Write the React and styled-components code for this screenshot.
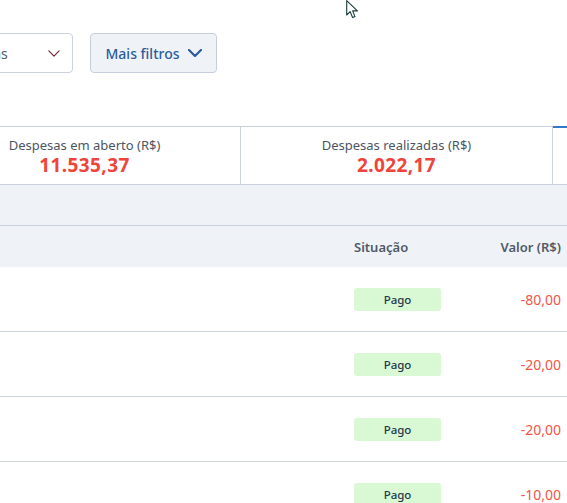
import React from "react";
import styled, { createGlobalStyle } from "styled-components";

const Global = createGlobalStyle`
  html, body { margin: 0; padding: 0; background: #fff; overflow: hidden; }
  body { font-family: "Noto Sans", "Open Sans", sans-serif; width: 567px; height: 503px; position: relative; }
`;

const Page = styled.div`
  margin-left: -71px;
  width: 638px;
`;

const FilterBar = styled.div`
  display: flex;
  align-items: center;
  gap: 17px;
  padding-top: 33px;
`;

const Select = styled.div`
  box-sizing: border-box;
  margin-left: -5px;
  width: 149px;
  height: 40px;
  border: 1px solid #c9d2dd;
  border-radius: 4px;
  display: flex;
  align-items: center;
  padding: 0 12px;
  color: #4f5966;
  font-size: 14px;
  span { margin-right: auto; }
`;

const FilterButton = styled.button`
  box-sizing: border-box;
  height: 40px;
  width: 127px;
  border: 1px solid #c5cfdb;
  border-radius: 4px;
  background: #eff3f8;
  color: #2d5b9b;
  font-family: inherit;
  font-size: 14px;
  font-weight: 500;
  display: flex;
  align-items: center;
  justify-content: center;
  gap: 8px;
  padding: 0;
`;

const SummaryRow = styled.div`
  margin-top: 53px;
  display: flex;
  border-top: 1px solid #c8d1dc;
  border-bottom: 1px solid #c8d1dc;
`;

const Card = styled.div`
  position: relative;
  flex: 0 0 312px;
  box-sizing: border-box;
  height: 57px;
  border-right: 1px solid #c8d1dc;
  display: flex;
  flex-direction: column;
  align-items: center;
  padding-top: 9px;
  &::before {
    content: "";
    display: ${(p) => (p.$active ? "block" : "none")};
    position: absolute;
    left: 0;
    right: 0;
    top: -1px;
    height: 2px;
    background: #3479c6;
  }
`;

const CardLabel = styled.div`
  font-size: 13px;
  line-height: 18px;
  color: #4c5664;
`;

const CardValue = styled.div`
  font-size: 19px;
  line-height: 22px;
  font-weight: 700;
  color: #f0443a;
  letter-spacing: 0.4px;
`;

const Band = styled.div`
  height: 40px;
  background: #eff3f8;
  border-bottom: 1px solid #c8d1dc;
`;

const Row = styled.div`
  display: grid;
  grid-template-columns: 1fr 100px 107px;
  align-items: center;
  padding-right: 6px;
  height: ${(p) => (p.$head ? "41px" : "64px")};
  background: ${(p) => (p.$head ? "#eff3f8" : "#fff")};
  border-bottom: ${(p) => (p.$head ? "none" : "1px solid #cdd4dd")};
`;

const HeadCell = styled.div`
  font-size: 13px;
  font-weight: 600;
  color: #505a66;
  text-align: ${(p) => (p.$right ? "right" : "left")};
`;

const Badge = styled.div`
  width: 87px;
  height: 23px;
  border-radius: 3px;
  background: #d9f9d5;
  color: #26384a;
  font-size: 11.5px;
  font-weight: 500;
  display: flex;
  align-items: center;
  justify-content: center;
`;

const Amount = styled.div`
  text-align: right;
  font-size: 14px;
  color: #f25546;
`;

const Cursor = styled.svg`
  position: absolute;
  left: 346px;
  top: 0;
`;

const Chevron = ({ color, w, h, sw }) => (
  <svg width={w} height={h} viewBox="0 0 14 8" fill="none">
    <path d="M1 1 L7 7 L13 1" stroke={color} strokeWidth={sw} strokeLinecap="round" strokeLinejoin="round" />
  </svg>
);

const rows = ["-80,00", "-20,00", "-20,00", "-10,00"];

export default function App() {
  return (
    <>
      <Global />
      <Page>
        <FilterBar>
          <Select>
            <span>Categorias</span>
            <Chevron color="#6e2c3c" w={12} h={7} sw={1.4} />
          </Select>
          <FilterButton>
            Mais filtros
            <Chevron color="#2d5b9b" w={14} h={8} sw={2.2} />
          </FilterButton>
        </FilterBar>
        <SummaryRow>
          <Card>
            <CardLabel>Despesas em aberto (R$)</CardLabel>
            <CardValue>11.535,37</CardValue>
          </Card>
          <Card>
            <CardLabel>Despesas realizadas (R$)</CardLabel>
            <CardValue>2.022,17</CardValue>
          </Card>
          <Card $active />
        </SummaryRow>
        <Band />
        <Row $head>
          <div />
          <HeadCell>Situação</HeadCell>
          <HeadCell $right>Valor (R$)</HeadCell>
        </Row>
        {rows.map((v, i) => (
          <Row key={i}>
            <div />
            <Badge>Pago</Badge>
            <Amount>{v}</Amount>
          </Row>
        ))}
      </Page>
      <Cursor width="13" height="19" viewBox="0 0 13 19">
        <path d="M0.7 0.7 L0.7 15 L4.2 11.7 L6.6 17.6 L9 16.6 L6.6 10.9 L11.4 10.9 Z" fill="#fff" stroke="#1b3a3d" strokeWidth="1.1" strokeLinejoin="round" />
      </Cursor>
    </>
  );
}
